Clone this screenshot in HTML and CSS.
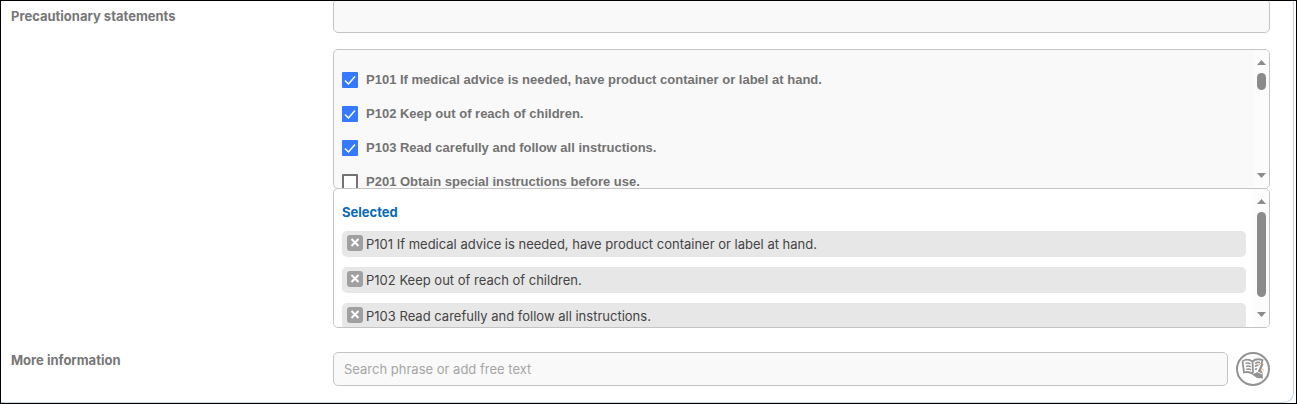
FILE: index.html
```html
<!DOCTYPE html>
<html lang="en">
<head>
  <meta charset="UTF-8">
  <meta name="viewport" content="width=device-width, initial-scale=1.0">
  <title>Precautionary statements</title>
  <link rel="stylesheet" href="styles.css">
</head>
<body>
  <div class="frame">
    <form class="panel">
      <div class="row">
        <label class="row-label row-label-input" for="precautionary">Precautionary statements</label>
        <input type="text" class="text-input" id="precautionary">
      </div>

      <div class="row lists">
        <div class="list options">
          <div class="list-content">
            <label class="option"><input type="checkbox" checked> P101 If medical advice is needed, have product container or label at hand.</label>
            <label class="option"><input type="checkbox" checked> P102 Keep out of reach of children.</label>
            <label class="option"><input type="checkbox" checked> P103 Read carefully and follow all instructions.</label>
            <label class="option"><input type="checkbox"> P201 Obtain special instructions before use.</label>
          </div>
          <div class="scrollbar" aria-hidden="true">
            <span class="arrow-up"></span>
            <div class="track"><div class="thumb thumb-short"></div></div>
            <span class="arrow-down"></span>
          </div>
        </div>

        <div class="list selected">
          <div class="list-content">
            <h2>Selected</h2>
            <ul>
              <li><button type="button" class="remove" aria-label="Remove P101"><svg viewBox="0 0 16 16"><path d="M4.5 4 11.5 11M11.5 4 4.5 11"/></svg></button>P101 If medical advice is needed, have product container or label at hand.</li>
              <li><button type="button" class="remove" aria-label="Remove P102"><svg viewBox="0 0 16 16"><path d="M4.5 4 11.5 11M11.5 4 4.5 11"/></svg></button>P102 Keep out of reach of children.</li>
              <li><button type="button" class="remove" aria-label="Remove P103"><svg viewBox="0 0 16 16"><path d="M4.5 4 11.5 11M11.5 4 4.5 11"/></svg></button>P103 Read carefully and follow all instructions.</li>
            </ul>
          </div>
          <div class="scrollbar" aria-hidden="true">
            <span class="arrow-up"></span>
            <div class="track"><div class="thumb thumb-long"></div></div>
            <span class="arrow-down"></span>
          </div>
        </div>
      </div>

      <div class="row">
        <label class="row-label" for="more-info">More information</label>
        <div class="search">
          <input type="text" class="text-input" id="more-info" placeholder="Search phrase or add free text">
          <button type="button" class="phrase-button" aria-label="Phrase library">
            <svg viewBox="0 0 30 30">
              <!-- open book -->
              <g fill="none" stroke="#929292" stroke-width="1.8">
                <path d="M4.500 7Q10 4 14.500 7.500Q18 4 24.500 6L23.500 10M4.500 7 6 18.500Q11 17 15 20M14.500 7.500 15 19"/>
                <path stroke-width="1.500" d="M7.500 9.500Q10.500 8.500 12.500 10M8 12.500Q11 11.500 12.800 13M8.200 15.500Q11 14.500 13 16M17 9.500Q19 8 22 8.500M17 12.500Q18.500 11 20.500 11.500M17 15.500 19 14.500"/>
              </g>
              <!-- hand with pen -->
              <path fill="#929292" d="M23.500 9 25.500 10 23 16 24.500 18.500 25 24.500 19 24 14 20.500 18.500 18.500 20.500 16Z"/>
              <path fill="none" stroke="#fff" d="M19 17.500 24 20"/>
              <path fill="none" stroke="#e9a56b" d="M21 11 22.500 9M24 14.500 25.500 16.500"/>
            </svg>
          </button>
        </div>
      </div>
    </form>
  </div>
</body>
</html>
```
FILE: styles.css
```css
* {
  box-sizing: border-box;
}
body {
  margin: 0;
  font-family: Inter, "Liberation Sans", sans-serif;
  font-size: 13px;
  line-height: 16px;
  color: #444;
  background-color: #fff;
}
.frame {
  border: 1px solid #000;
  min-height: 100vh;
  padding-right: 2px;
  overflow: hidden;
}
.panel {
  margin-top: -2px;
  padding: 0 23px 16px 10px;
  border: solid #c9d3e2;
  border-width: 0 1px 1px 0;
  border-radius: 0 0 10px 0;
}
.row {
  display: grid;
  grid-template-columns: 322px minmax(0, 1fr);
}
.row-label {
  font-weight: 700;
  color: #777;
}
.row-label-input {
  line-height: 34px;
}
.text-input {
  width: 100%;
  height: 34px;
  padding: 0 10px;
  border: 1px solid #c4c4c4;
  border-radius: 5px;
  background-color: #f9f9f9;
  font: inherit;
  color: #444;
}
.text-input::placeholder {
  color: #a6a6a6;
}

/* Option and selection lists */
.lists {
  margin: 16px 0 24px;
}
.list {
  grid-column: 2;
  display: flex;
  height: 140px;
  border: 1px solid #c4c4c4;
  border-radius: 5px;
  overflow: hidden;
}
.list-content {
  flex: 1;
  padding: 0 8px;
  overflow: hidden;
}
.options {
  background-color: #f9f9f9;
}
.options .list-content {
  padding-top: 13px;
}
.option {
  display: flex;
  align-items: center;
  gap: 8px;
  height: 34px;
  font-family: "Liberation Sans", Arial, sans-serif;
  font-weight: 700;
  color: #737373;
}
.option input {
  appearance: none;
  width: 16px;
  height: 16px;
  margin: 0;
  border: 2px solid #737373;
  border-radius: 1px;
  background-color: #fff;
}
.option input:checked {
  border-color: #3479ff;
  background: #3479ff url("data:image/svg+xml,%3Csvg xmlns='http://www.w3.org/2000/svg' viewBox='0 0 12 12'%3E%3Cpath d='M1 6.500 4.500 10 11 2.500' fill='none' stroke='white' stroke-width='1.500'/%3E%3C/svg%3E") center / 12px no-repeat;
}
.selected {
  margin-top: -1px;
  background-color: #fff;
}
.selected h2 {
  margin: 15px 0 11px;
  font-size: 13px;
  font-weight: 700;
  color: #0b6ab8;
}
.selected ul {
  display: grid;
  gap: 10px;
  margin: 0;
  padding: 0;
  list-style: none;
}
.selected li {
  display: flex;
  gap: 3px;
  height: 26px;
  padding: 4px 5px;
  border-radius: 5px;
  background-color: #e7e7e7;
  line-height: 18px;
}
.remove {
  width: 16px;
  height: 16px;
  padding: 0;
  border: 0;
  border-radius: 3px;
  background-color: #a0a0a0;
}
.remove svg {
  display: block;
  fill: none;
  stroke: #fff;
  stroke-width: 2;
}

/* Scrollbars */
.scrollbar {
  display: flex;
  flex-direction: column;
  align-items: center;
  gap: 8px;
  width: 15px;
  padding: 10px 0;
  background-color: #fcfcfc;
}
.arrow-up,
.arrow-down {
  width: 9px;
  height: 5px;
  background-color: #8b8b8b;
}
.arrow-up {
  clip-path: polygon(50% 0, 100% 100%, 0 100%);
}
.arrow-down {
  clip-path: polygon(0 0, 100% 0, 50% 100%);
}
.track {
  flex: 1;
}
.thumb {
  width: 9px;
  border-radius: 5px;
  background-color: #8b8b8b;
}
.thumb-short {
  height: 17px;
}
.thumb-long {
  height: 85px;
}

/* Search field */
.search {
  display: flex;
  gap: 8px;
}
.phrase-button {
  flex: none;
  width: 34px;
  height: 34px;
  padding: 0;
  border: 2px solid #929292;
  border-radius: 50%;
  background-color: #fff;
}
.phrase-button svg {
  display: block;
}
```
